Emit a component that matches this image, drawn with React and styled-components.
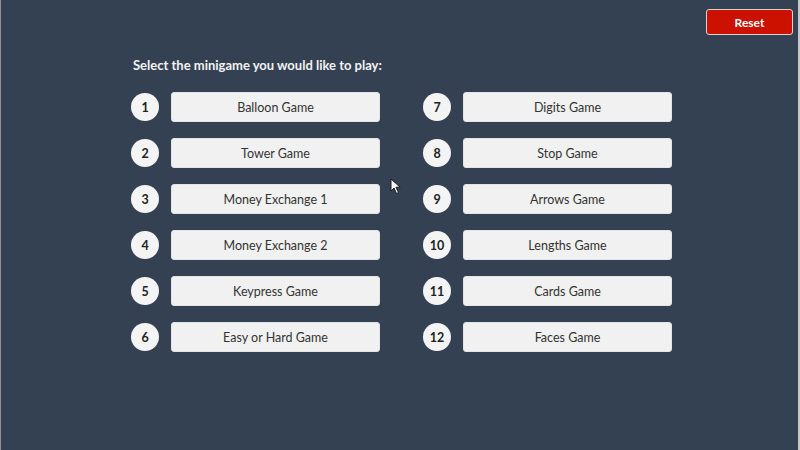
import React from "react";
import styled, { createGlobalStyle } from "styled-components";

const Global = createGlobalStyle`
  html, body { margin: 0; padding: 0; }
  body {
    width: 800px;
    height: 450px;
    overflow: hidden;
    background: #344152;
    font-family: Lato, "Open Sans", sans-serif;
  }
`;

const Page = styled.div`
  position: relative;
  width: 800px;
  height: 450px;
  box-sizing: border-box;
  border-left: 1px solid #8a929c;
  border-right: 2px solid #c4c8cc;
  background: #344152;
`;

const TopBar = styled.div`
  display: flex;
  justify-content: flex-end;
  padding: 9px 5px 0 0;
`;

const ResetButton = styled.button`
  width: 87px;
  height: 26px;
  box-sizing: border-box;
  background: #cc1100;
  border: 1px solid #d9d4d2;
  border-radius: 3px;
  color: #ffffff;
  font-family: Lato, sans-serif;
  font-weight: 700;
  font-size: 12px;
  cursor: pointer;
`;

const Content = styled.div`
  padding: 22px 0 0 130px;
`;

const Title = styled.h1`
  margin: 0 0 19px 2px;
  color: #f2f2f2;
  font-size: 13px;
  font-weight: 700;
  line-height: 16px;
`;

const Columns = styled.div`
  display: grid;
  grid-template-columns: 250px 250px;
  column-gap: 42px;
`;

const Column = styled.div`
  display: flex;
  flex-direction: column;
  gap: 16px;
`;

const Row = styled.div`
  display: flex;
  align-items: center;
  gap: 12px;
`;

const Badge = styled.div`
  width: 28px;
  height: 28px;
  border-radius: 50%;
  background: #f4f4f4;
  color: #222;
  font-weight: 700;
  font-size: 12.5px;
  display: flex;
  align-items: center;
  justify-content: center;
  flex: none;
`;

const GameButton = styled.button`
  width: 209px;
  height: 30px;
  background: #f1f1f1;
  border: 1px solid #e4e4e4;
  border-radius: 3px;
  color: #333;
  font-family: Lato, sans-serif;
  font-size: 12.5px;
  display: flex;
  align-items: center;
  justify-content: center;
  padding: 0;
`;

const Cursor = styled.svg`
  position: absolute;
  left: 389px;
  top: 178px;
`;

const left = ["Balloon Game", "Tower Game", "Money Exchange 1", "Money Exchange 2", "Keypress Game", "Easy or Hard Game"];
const right = ["Digits Game", "Stop Game", "Arrows Game", "Lengths Game", "Cards Game", "Faces Game"];

export default function App() {
  return (
    <Page>
      <Global />
      <TopBar>
        <ResetButton>Reset</ResetButton>
      </TopBar>
      <Content>
        <Title>Select the minigame you would like to play:</Title>
        <Columns>
          <Column>
            {left.map((g, i) => (
              <Row key={g}>
                <Badge>{i + 1}</Badge>
                <GameButton>{g}</GameButton>
              </Row>
            ))}
          </Column>
          <Column>
            {right.map((g, i) => (
              <Row key={g}>
                <Badge>{i + 7}</Badge>
                <GameButton>{g}</GameButton>
              </Row>
            ))}
          </Column>
        </Columns>
      </Content>
      <Cursor width="12" height="17" viewBox="0 0 12 17">
        <path d="M1 1 L1 13 L4 10 L6.5 15.5 L8.5 14.5 L6 9.2 L10.2 9.2 Z" fill="#ffffff" stroke="#1a1a1a" strokeWidth="1" strokeLinejoin="round" />
      </Cursor>
    </Page>
  );
}
